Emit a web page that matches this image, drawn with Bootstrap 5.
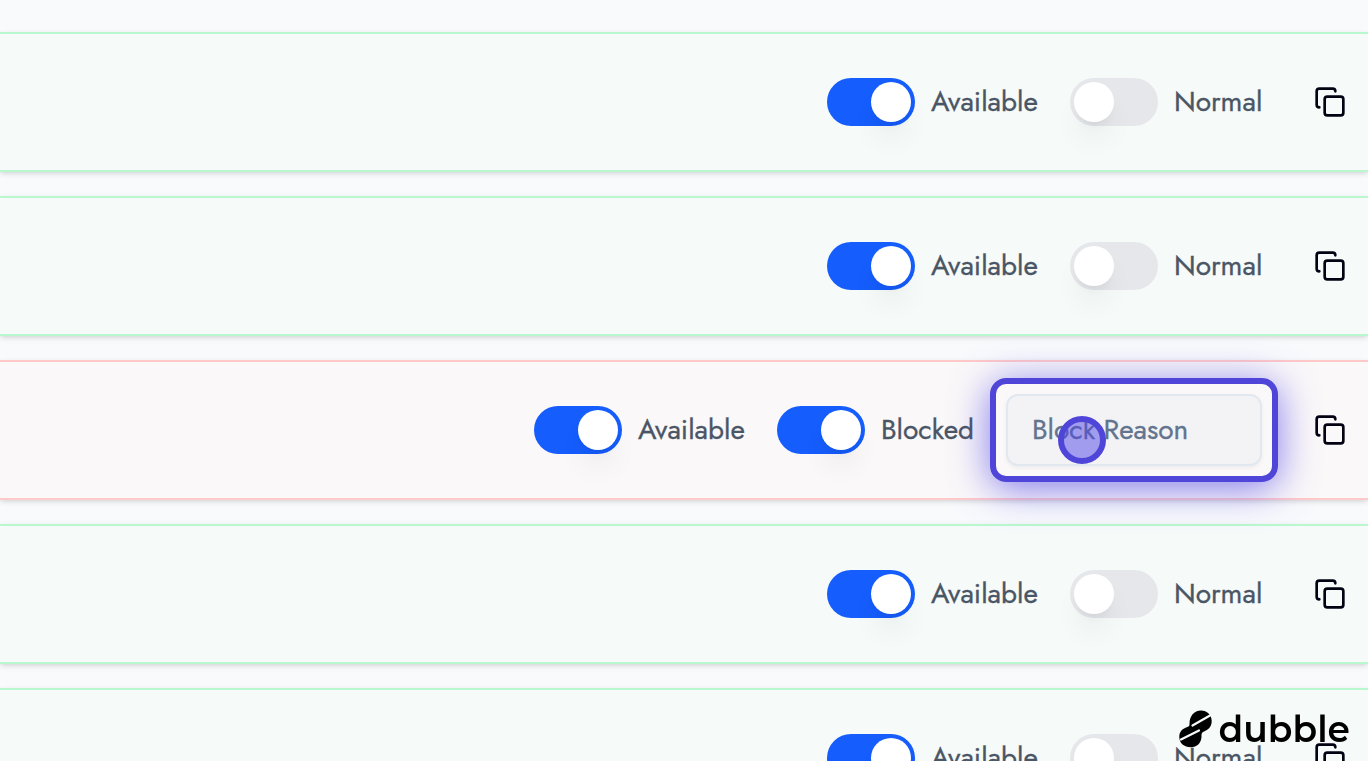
<!DOCTYPE html>
<html lang="en">
<head>
<meta charset="utf-8">
<meta name="viewport" content="width=device-width, initial-scale=1">
<title>Availability</title>
<link href="https://cdn.jsdelivr.net/npm/bootstrap@5.3.0/dist/css/bootstrap.min.css" rel="stylesheet">
<style>
  body { background: #f9fafc; font-family: Jost, Lato, sans-serif; font-size: 28px; line-height: 40px; color: #4a5565; }
  .slots { padding-top: 32px; gap: 24px; }
  .slot { height: 140px; padding-right: 22px; background: #f6faf9; border-top: 2px solid #b9f8cf; border-bottom: 2px solid #b9f8cf; box-shadow: 0 2px 6px rgba(0,0,0,.1), 0 2px 4px -2px rgba(0,0,0,.1); }
  .slot.blocked { background: #fbf8f9; border-color: #ffc9c9; }
  .controls { gap: 32px; margin-right: 52px; }
  .toggle { gap: 16px; }
  .toggle label { padding-bottom: 1px; }
  .toggle .form-check-input { width: 88px; height: 48px; margin: 0; padding: 4px; border: 0; border-radius: 24px; background: #e6e7eb; flex-shrink: 0; }
  .toggle .form-check-input::before { content: ""; display: block; width: 40px; height: 40px; border-radius: 50%; background: #fff; box-shadow: 0 20px 30px -6px rgba(0,0,0,.08), 0 8px 12px -8px rgba(0,0,0,.1); }
  .toggle .form-check-input:checked { background: #155dfc; }
  .toggle .form-check-input:checked::before { margin-left: auto; }
  .w-available { width: 107px; }
  .w-normal { width: 88px; }
  .w-blocked { width: 93px; }
  .reason-box { width: 256px; }
  .reason-box .form-control { height: 72px; padding: 0 24px 2px; border: 2px solid #e2e8f0; border-radius: 12px; background: #f3f3f5; font-size: 28px; box-shadow: 0 2px 4px rgba(0,0,0,.05); }
  .reason-box .form-control::placeholder { color: #62748e; opacity: 1; }
  .toggle label, .reason-box .form-control { -webkit-text-stroke: 0.3px; }
  .spotlight { inset: -16px; border: 6px solid #4f46d9; border-radius: 16px; box-shadow: 0 6px 38px rgba(79,70,229,.7); pointer-events: none; }
  .click-dot { left: 52px; top: 22px; width: 48px; height: 48px; border: 6px solid #4f46d9; border-radius: 50%; background: rgba(79,70,229,.5); pointer-events: none; }
  .copy-btn { color: #030213; line-height: 0; }
  .brand { right: 18px; bottom: 12px; gap: 6px; color: #000; font: 600 36px/40px Montserrat, Inter, sans-serif; }
</style>
</head>
<body class="vh-100 overflow-hidden">
<svg class="d-none">
  <symbol id="copy" viewBox="0 0 24 24" fill="none" stroke="currentColor" stroke-width="2" stroke-linecap="round" stroke-linejoin="round">
    <rect x="8" y="8" width="14" height="14" rx="2"/><path d="M4 16c-1.100 0-2-.9-2-2V4c0-1.100.9-2 2-2h10c1.100 0 2 .9 2 2"/>
  </symbol>
</svg>
<main class="slots d-flex flex-column vh-100 overflow-hidden">
  <section class="slot d-flex align-items-center justify-content-end flex-shrink-0">
    <div class="controls d-flex align-items-center">
      <div class="toggle d-flex align-items-center"><input class="form-check-input" type="checkbox" role="switch" id="a1" checked><label class="w-available text-nowrap" for="a1">Available</label></div>
      <div class="toggle d-flex align-items-center"><input class="form-check-input" type="checkbox" role="switch" id="b1"><label class="w-normal text-nowrap" for="b1">Normal</label></div>
    </div>
    <button class="copy-btn btn p-0 border-0" type="button" aria-label="Copy"><svg width="32" height="32"><use href="#copy"/></svg></button>
  </section>
  <section class="slot d-flex align-items-center justify-content-end flex-shrink-0">
    <div class="controls d-flex align-items-center">
      <div class="toggle d-flex align-items-center"><input class="form-check-input" type="checkbox" role="switch" id="a2" checked><label class="w-available text-nowrap" for="a2">Available</label></div>
      <div class="toggle d-flex align-items-center"><input class="form-check-input" type="checkbox" role="switch" id="b2"><label class="w-normal text-nowrap" for="b2">Normal</label></div>
    </div>
    <button class="copy-btn btn p-0 border-0" type="button" aria-label="Copy"><svg width="32" height="32"><use href="#copy"/></svg></button>
  </section>
  <section class="slot blocked d-flex align-items-center justify-content-end flex-shrink-0">
    <div class="controls d-flex align-items-center">
      <div class="toggle d-flex align-items-center"><input class="form-check-input" type="checkbox" role="switch" id="a3" checked><label class="w-available text-nowrap" for="a3">Available</label></div>
      <div class="toggle d-flex align-items-center"><input class="form-check-input" type="checkbox" role="switch" id="b3" checked><label class="w-blocked text-nowrap" for="b3">Blocked</label></div>
      <div class="reason-box position-relative">
        <input class="form-control" type="text" placeholder="Block Reason" aria-label="Block Reason">
        <div class="spotlight position-absolute"></div>
        <div class="click-dot position-absolute"></div>
      </div>
    </div>
    <button class="copy-btn btn p-0 border-0" type="button" aria-label="Copy"><svg width="32" height="32"><use href="#copy"/></svg></button>
  </section>
  <section class="slot d-flex align-items-center justify-content-end flex-shrink-0">
    <div class="controls d-flex align-items-center">
      <div class="toggle d-flex align-items-center"><input class="form-check-input" type="checkbox" role="switch" id="a4" checked><label class="w-available text-nowrap" for="a4">Available</label></div>
      <div class="toggle d-flex align-items-center"><input class="form-check-input" type="checkbox" role="switch" id="b4"><label class="w-normal text-nowrap" for="b4">Normal</label></div>
    </div>
    <button class="copy-btn btn p-0 border-0" type="button" aria-label="Copy"><svg width="32" height="32"><use href="#copy"/></svg></button>
  </section>
  <section class="slot d-flex align-items-center justify-content-end flex-shrink-0">
    <div class="controls d-flex align-items-center">
      <div class="toggle d-flex align-items-center"><input class="form-check-input" type="checkbox" role="switch" id="a5" checked><label class="w-available text-nowrap" for="a5">Available</label></div>
      <div class="toggle d-flex align-items-center"><input class="form-check-input" type="checkbox" role="switch" id="b5"><label class="w-normal text-nowrap" for="b5">Normal</label></div>
    </div>
    <button class="copy-btn btn p-0 border-0" type="button" aria-label="Copy"><svg width="32" height="32"><use href="#copy"/></svg></button>
  </section>
</main>
<div class="brand position-fixed d-flex align-items-center">
  <svg width="34" height="38" viewBox="0 0 34 38"><path d="M10.500 14C10.500 6 15 .5 22 .5C28 .5 32.700 5 32.700 11C32.700 17 29 20 25 21.500C22.500 22.500 22.500 24 22.500 27C22 33 18 37.300 12 37.300C5 37.300 .3 33 .3 27C.3 22 3 19 7 17.500C10 16.500 10.500 16 10.500 14Z"/><path d="M13.500 15.500L31 5.500M2 29.500L20 20.500" stroke="#f6faf9" stroke-width="2.200" stroke-linecap="round"/></svg>
  <span>dubble</span>
</div>
<script src="https://cdn.jsdelivr.net/npm/bootstrap@5.3.0/dist/js/bootstrap.bundle.min.js"></script>
</body>
</html>
